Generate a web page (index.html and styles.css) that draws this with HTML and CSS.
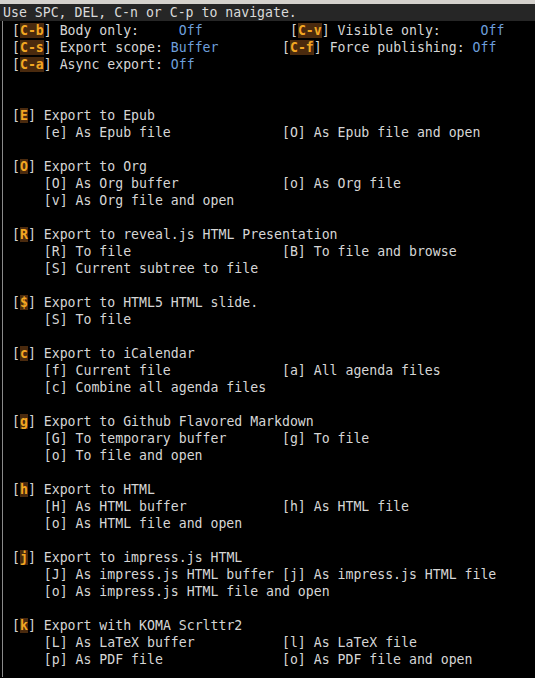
FILE: index.html
```html
<!DOCTYPE html>
<html>
<head>
<meta charset="utf-8">
<link rel="stylesheet" href="styles.css">
</head>
<body>
<div class="topstrip"></div>
<div class="echo">Use SPC, DEL, C-n or C-p to navigate.</div>
<div class="main">
<pre class="menu">[<span class="k">C-b</span>] Body only:     <span class="v">Off</span>           [<span class="k">C-v</span>] Visible only:     <span class="v">Off</span>
[<span class="k">C-s</span>] Export scope: <span class="v">Buffer</span>        [<span class="k">C-f</span>] Force publishing: <span class="v">Off</span>
[<span class="k">C-a</span>] Async export: <span class="v">Off</span>


[<span class="k">E</span>] Export to Epub
    [e] As Epub file              [O] As Epub file and open

[<span class="k">O</span>] Export to Org
    [O] As Org buffer             [o] As Org file
    [v] As Org file and open

[<span class="k">R</span>] Export to reveal.js HTML Presentation
    [R] To file                   [B] To file and browse
    [S] Current subtree to file

[<span class="k">$</span>] Export to HTML5 HTML slide.
    [S] To file

[<span class="k">c</span>] Export to iCalendar
    [f] Current file              [a] All agenda files
    [c] Combine all agenda files

[<span class="k">g</span>] Export to Github Flavored Markdown
    [G] To temporary buffer       [g] To file
    [o] To file and open

[<span class="k">h</span>] Export to HTML
    [H] As HTML buffer            [h] As HTML file
    [o] As HTML file and open

[<span class="k">j</span>] Export to impress.js HTML
    [J] As impress.js HTML buffer [j] As impress.js HTML file
    [o] As impress.js HTML file and open

[<span class="k">k</span>] Export with KOMA Scrlttr2
    [L] As LaTeX buffer           [l] As LaTeX file
    [p] As PDF file               [o] As PDF file and open</pre>
</div>
</body>
</html>
```
FILE: styles.css
```css
html, body {
  margin: 0;
  padding: 0;
  background: #000000;
  height: 100%;
  overflow: hidden;
}
body {
  font-family: "DejaVu Sans Mono", monospace;
  font-size: 13.2px;
  color: #d6d6d6;
}
.topstrip {
  height: 4px;
  background: #d4d1cc;
}
.echo {
  height: 17px;
  line-height: 17px;
  background: #262626;
  color: #dadada;
  padding-left: 3px;
  white-space: pre;
}
.main {
  margin-left: 2px;
  border-left: 1px solid #8a8a8a;
  padding-left: 9px;
  padding-top: 1px;
  height: 656px;
  box-sizing: border-box;
  overflow: hidden;
}
.menu {
  margin: 0;
  font-family: inherit;
  font-size: inherit;
  line-height: 17px;
  color: #d6d6d6;
}
.k {
  color: #f3a722;
  background: #4a2a0e;
  font-weight: bold;
}
.v {
  color: #6d9fdc;
}
```
